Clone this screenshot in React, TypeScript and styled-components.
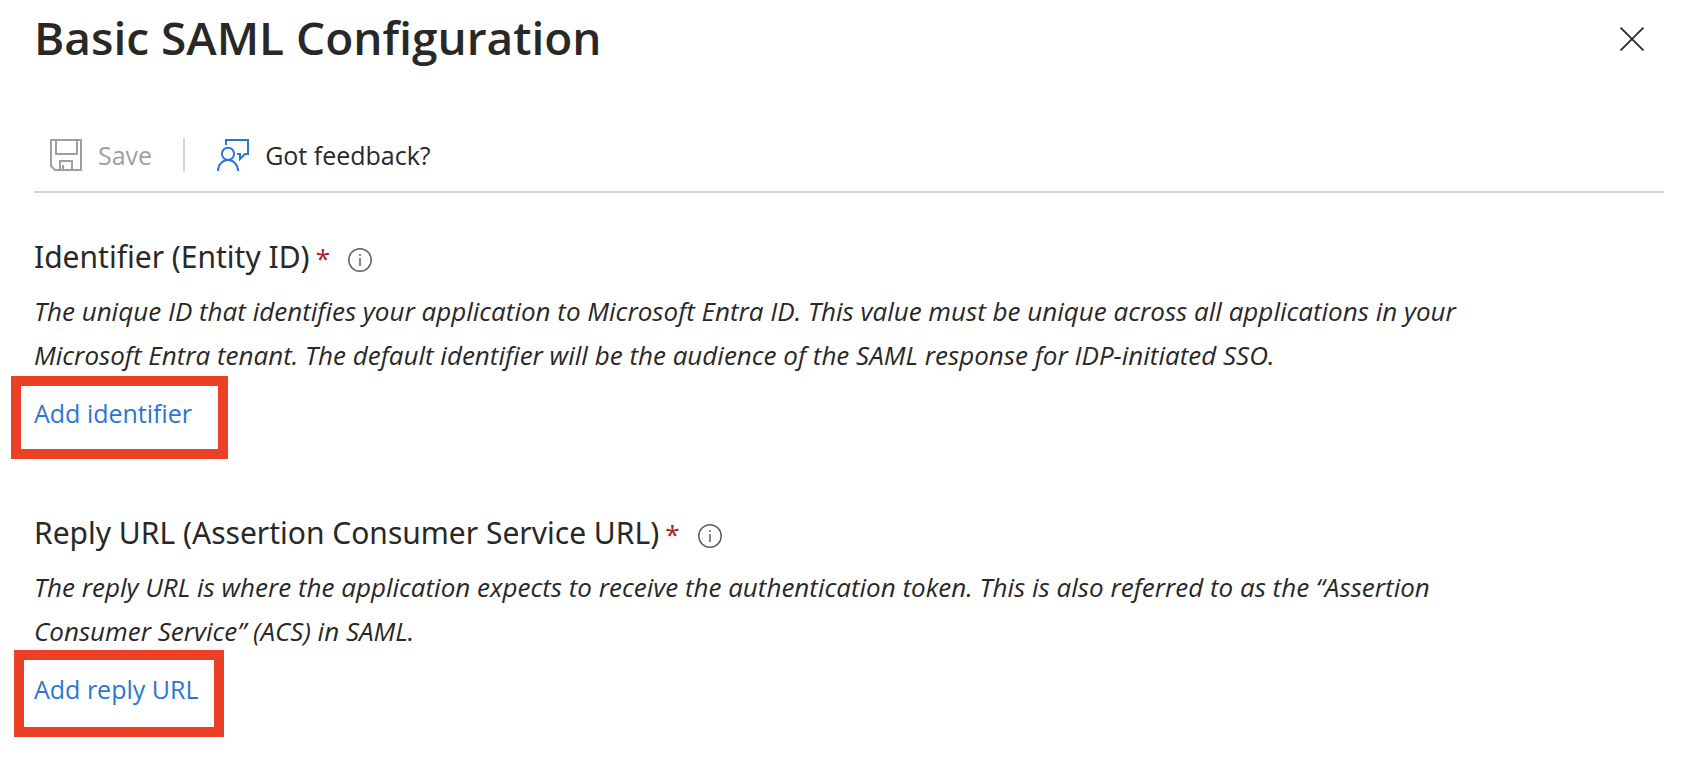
import React from 'react';
import styled, { createGlobalStyle } from 'styled-components';

const colors = {
  text: '#292827',
  muted: '#a19f9d',
  link: '#2b76d2',
  rule: '#d4d4d4',
  required: '#a4262c',
  info: '#605e5c',
  highlight: '#eb4026',
};

const GlobalStyle = createGlobalStyle`
  *, *::before, *::after { box-sizing: border-box; }
  body {
    margin: 0;
    background: #ffffff;
    color: ${colors.text};
    font-family: 'Open Sans', 'Noto Sans', sans-serif;
  }
  button { font: inherit; color: inherit; background: none; border: 0; padding: 0; cursor: pointer; }
  svg { display: block; flex: none; }
`;

const Panel = styled.main`
  padding: 0 28px 48px 34px;
`;

const Header = styled.header`
  display: flex;
  align-items: center;
  justify-content: space-between;
  height: 78px;
  padding-right: 20px;
`;

const Title = styled.h1`
  margin: 0;
  padding-bottom: 4px;
  font-size: 46px;
  line-height: 64px;
  font-weight: 600;
`;

const CloseButton = styled.button`
  display: flex;
`;

const Toolbar = styled.div`
  display: flex;
  align-items: center;
  margin-top: 60px;
  padding: 0 16px 19px;
  border-bottom: 2px solid ${colors.rule};
`;

const ToolbarButton = styled.button`
  display: flex;
  align-items: center;
  gap: 16px;
  font-size: 25px;
  line-height: 34px;

  &:disabled {
    color: ${colors.muted};
    cursor: default;
  }
`;

const ToolbarDivider = styled.span`
  width: 2px;
  height: 34px;
  margin: 0 32px 0 31px;
  background: ${colors.rule};
`;

const Sections = styled.div`
  display: flex;
  flex-direction: column;
  gap: 82px;
  margin-top: 44px;
`;

const FieldSection = styled.section`
  display: flex;
  flex-direction: column;
  align-items: flex-start;
`;

const LabelRow = styled.div`
  display: flex;
  align-items: center;
`;

const FieldLabel = styled.h2`
  margin: 0;
  font-family: 'Noto Sans', 'Open Sans', sans-serif;
  font-size: 30px;
  line-height: 40px;
  font-weight: 400;
`;

const Required = styled.span`
  margin-left: 6px;
  font-size: 26px;
  line-height: 1;
  color: ${colors.required};
`;

const InfoButton = styled.button`
  display: flex;
  margin-left: 18px;
  padding-top: 6px;
`;

const Description = styled.p`
  max-width: 1460px;
  margin: 12px 0 18px;
  font-size: 26px;
  line-height: 44px;
  font-style: italic;
`;

/* The red frame is an annotation laid over the panel around the link. */
const AddLink = styled.a<{ $frame: string }>`
  position: relative;
  color: ${colors.link};
  font-size: 25px;
  line-height: 36px;
  text-decoration: none;

  &::before {
    content: '';
    position: absolute;
    inset: ${(p) => p.$frame};
    border: 10px solid ${colors.highlight};
    pointer-events: none;
  }
`;

const CloseIcon = () => (
  <svg width="24" height="24" viewBox="0 0 24 24" fill="none" stroke={colors.text} strokeWidth="1.8" aria-hidden="true">
    <path d="M0.6 0.6L23.4 23.4M23.4 0.6L0.6 23.4" />
  </svg>
);

const SaveIcon = () => (
  <svg width="32" height="32" viewBox="0 0 32 32" fill="none" stroke={colors.muted} strokeWidth="2" aria-hidden="true">
    <path d="M1 1H31V31H5L1 27Z" />
    <path d="M6 1V15H27V1" />
    <path d="M10 31V22H22V31M13 26V31" />
  </svg>
);

const FeedbackIcon = () => (
  <svg width="32" height="32" viewBox="0 0 32 32" fill="none" stroke={colors.link} strokeWidth="2" aria-hidden="true">
    <path d="M9 6V1H31V15H28L23 20V15H20" />
    <circle cx="11" cy="14.8" r="6.1" />
    <path d="M1 32C1 25.5 5.5 21 11 21S21 25.5 21 32" />
  </svg>
);

const InfoIcon = () => (
  <svg width="24" height="24" viewBox="0 0 24 24" fill="none" stroke={colors.info} strokeWidth="1.5" aria-hidden="true">
    <circle cx="12" cy="12" r="11.2" />
    <path d="M12 10V18M12 6V8" />
  </svg>
);

interface FieldProps {
  label: string;
  description: string;
  action: string;
  frame: string;
}

const Field = ({ label, description, action, frame }: FieldProps) => (
  <FieldSection>
    <LabelRow>
      <FieldLabel>
        {label}
        <Required>*</Required>
      </FieldLabel>
      <InfoButton type="button" aria-label={`About ${label}`}>
        <InfoIcon />
      </InfoButton>
    </LabelRow>
    <Description>{description}</Description>
    <AddLink href="#" $frame={frame}>
      {action}
    </AddLink>
  </FieldSection>
);

export default function App() {
  return (
    <>
      <GlobalStyle />
      <Panel>
        <Header>
          <Title>Basic SAML Configuration</Title>
          <CloseButton type="button" aria-label="Close">
            <CloseIcon />
          </CloseButton>
        </Header>
        <Toolbar role="toolbar">
          <ToolbarButton type="button" disabled>
            <SaveIcon />
            Save
          </ToolbarButton>
          <ToolbarDivider />
          <ToolbarButton type="button">
            <FeedbackIcon />
            Got feedback?
          </ToolbarButton>
        </Toolbar>
        <Sections>
          <Field
            label="Identifier (Entity ID)"
            description="The unique ID that identifies your application to Microsoft Entra ID. This value must be unique across all applications in your Microsoft Entra tenant. The default identifier will be the audience of the SAML response for IDP-initiated SSO."
            action="Add identifier"
            frame="-19px -36px -28px -23px"
          />
          <Field
            label="Reply URL (Assertion Consumer Service URL)"
            description="The reply URL is where the application expects to receive the authentication token. This is also referred to as the “Assertion Consumer Service” (ACS) in SAML."
            action="Add reply URL"
            frame="-21px -26px -30px -20px"
          />
        </Sections>
      </Panel>
    </>
  );
}
